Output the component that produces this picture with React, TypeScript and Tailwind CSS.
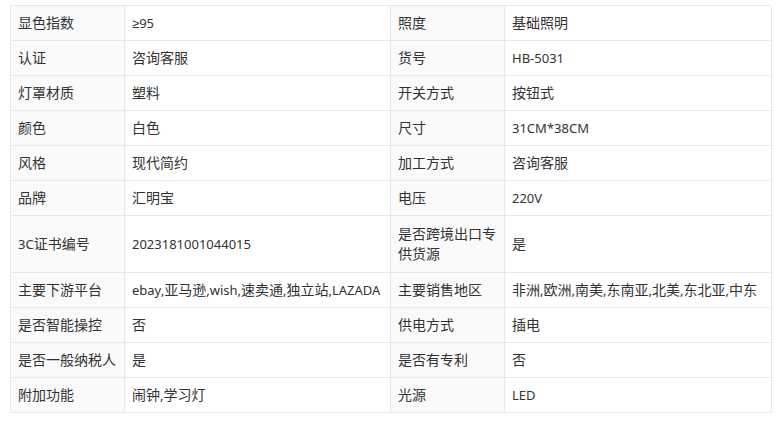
import React from "react";

const rows: [string, string, string, string, boolean?][] = [
  ["显色指数", "≥95", "照度", "基础照明"],
  ["认证", "咨询客服", "货号", "HB-5031"],
  ["灯罩材质", "塑料", "开关方式", "按钮式"],
  ["颜色", "白色", "尺寸", "31CM*38CM"],
  ["风格", "现代简约", "加工方式", "咨询客服"],
  ["品牌", "汇明宝", "电压", "220V"],
  ["3C证书编号", "2023181001044015", "是否跨境出口专供货源", "是", true],
  ["主要下游平台", "ebay,亚马逊,wish,速卖通,独立站,LAZADA", "主要销售地区", "非洲,欧洲,南美,东南亚,北美,东北亚,中东"],
  ["是否智能操控", "否", "供电方式", "插电"],
  ["是否一般纳税人", "是", "是否有专利", "否"],
  ["附加功能", "闹钟,学习灯", "光源", "LED"],
];

function T({ s }: { s: string }) {
  const parts = s.match(/[\u4e00-\u9fff]+|[^\u4e00-\u9fff]+/g) || [];
  return (
    <span>
      {parts.map((p, i) =>
        /[\u4e00-\u9fff]/.test(p) ? (
          <span key={i} className="text-[14px]">{p}</span>
        ) : p.startsWith("≥") ? (
          <span key={i}>
            <span style={{ fontFamily: '"Liberation Sans", sans-serif' }}>≥</span>
            {p.slice(1)}
          </span>
        ) : (
          <span key={i}>{p}</span>
        )
      )}
    </span>
  );
}

export default function App() {
  return (
    <div
      className="w-[782px] h-[424px] bg-white pt-[5px] pl-[10px] text-[13px] leading-[20px] text-[#333]"
      style={{ fontFamily: '"Noto Sans", "Noto Sans CJK SC", sans-serif' }}
    >
      <div className="grid w-[761px] grid-cols-[114px_266px_114px_267px] border-l border-t border-[#e8e8e8]">
        {rows.map((r, i) => {
          const h = r[4] ? "h-[57px]" : "h-[35px]";
          return (
            <React.Fragment key={i}>
              <div className={`${h} flex items-center bg-[#fafafa] border-r border-b border-[#e8e8e8] px-[7px] whitespace-nowrap`}><T s={r[0]} /></div>
              <div className={`${h} flex items-center bg-white border-r border-b border-[#e8e8e8] px-[7px] whitespace-nowrap`}><T s={r[1]} /></div>
              <div className={`${h} flex items-center bg-[#fafafa] border-r border-b border-[#e8e8e8] px-[7px]`}><T s={r[2]} /></div>
              <div className={`${h} flex items-center bg-white border-r border-b border-[#e8e8e8] px-[7px] whitespace-nowrap`}><T s={r[3]} /></div>
            </React.Fragment>
          );
        })}
      </div>
    </div>
  );
}
